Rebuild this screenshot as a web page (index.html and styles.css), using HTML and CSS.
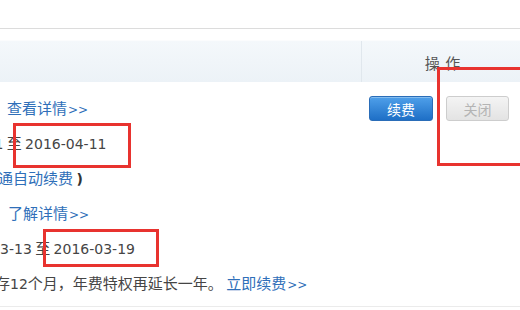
FILE: index.html
```html
<!DOCTYPE html>
<html lang="zh-CN">
<head>
<meta charset="utf-8">
<link rel="stylesheet" href="styles.css">
</head>
<body>
<div class="page">
  <div class="topline"></div>
  <div class="table">
    <div class="head">
      <div class="hcell"></div>
      <div class="hcell op">操 作</div>
    </div>
    <div class="row first">
      <div class="info">
        <div class="line l-a"><a class="link">查看详情<span class="gt">&gt;&gt;</span></a></div>
        <div class="line l-b"><span class="num">2015-04-11</span> 至 <span class="num">2016-04-11</span></div>
        <div class="line l-c">（<a class="link">开通自动续费</a> <b class="paren">)</b></div>
      </div>
      <div class="actions">
        <button class="btn btn-blue">续费</button>
        <button class="btn btn-grey">关闭</button>
      </div>
    </div>
    <div class="row second">
      <div class="info">
        <div class="line l-d"><a class="link">了解详情<span class="gt">&gt;&gt;</span></a></div>
        <div class="line l-e"><span class="num">2015-03-13</span> 至 <span class="num">2016-03-19</span></div>
        <div class="line l-f">续存<span class="num">12</span>个月，年费特权再延长一年。 <a class="link">立即续费<span class="gt">&gt;&gt;</span></a></div>
      </div>
      <div class="actions"></div>
    </div>
  </div>
  <div class="mark mark-1"></div>
  <div class="mark mark-2"></div>
  <div class="mark mark-3"></div>
</div>
</body>
</html>
```

FILE: styles.css
```css
* { box-sizing: border-box; }
html, body { margin: 0; padding: 0; background: #fff; }
body {
  font-family: "Noto Sans CJK SC", "DejaVu Sans", sans-serif;
  font-size: 15px;
  color: #454545;
}
.page {
  position: relative;
  width: 520px;
  height: 310px;
  overflow: hidden;
}
.topline {
  margin-top: 28px;
  border-top: 1px solid #dcdcdc;
}
.table {
  margin-top: 11px;
  width: 523px;
}
.head {
  display: grid;
  grid-template-columns: 361px 162px;
  height: 42px;
  background: linear-gradient(#f4f8fb, #ecf2f7);
  border-top: 1px solid #fbfcfd;
}
.hcell { display: flex; align-items: center; justify-content: center; }
.hcell.op {
  border-left: 1px solid #e0e7ed;
  color: #555;
  font-size: 15px;
  word-spacing: 2px;
  padding-top: 2px;
}
.row {
  display: grid;
  grid-template-columns: 361px 162px;
}
.row.first { padding-top: 8px; }
.row.second { padding-bottom: 6px; border-bottom: 1px solid #ebebeb; }
.info { display: flex; flex-direction: column; }
.line {
  height: 35px;
  line-height: 35px;
  white-space: nowrap;
}
.num {
  font-family: "DejaVu Sans", sans-serif;
  font-size: 14px;
}
.gt {
  font-family: "DejaVu Sans", sans-serif;
  font-size: 12px;
  margin-left: 1px;
}
.paren {
  font-family: "DejaVu Sans", sans-serif;
  font-size: 14px;
  color: #333;
}
.link { color: #2f6fb9; text-decoration: none; }
.l-a { padding-left: 7px; }
.l-b .num:first-child { margin-left: -78px; }
.l-c { margin-left: -32px; }
.l-d { padding-left: 8px; }
.l-e .num:first-child { margin-left: -49.5px; }
.l-f { margin-left: -20px; }
.actions {
  display: flex;
  gap: 13px;
  padding-left: 8px;
  padding-top: 6px;
  align-items: flex-start;
}
.btn {
  font-family: "Noto Sans CJK SC", sans-serif;
  font-size: 14px;
  height: 25px;
  padding: 0;
  border-radius: 3px;
  line-height: 22px;
}
.btn-blue {
  width: 64px;
  color: #fff;
  border: 1px solid #2a6db8;
  background: linear-gradient(#4fa0ea, #1e6fc6);
  box-shadow: inset 0 1px 0 rgba(255,255,255,0.3);
}
.btn-grey {
  width: 63px;
  color: #b4b4b4;
  border: 1px solid #cdcdcd;
  background: linear-gradient(#f4f4f4, #e3e3e3);
}
.mark {
  position: absolute;
  border: 3px solid #e8332f;
}
.mark-1 { left: 13px; top: 123px; width: 118px; height: 45px; }
.mark-2 { left: 43px; top: 229px; width: 116px; height: 38px; }
.mark-3 { left: 437px; top: 67px; width: 100px; height: 99px; }
```
